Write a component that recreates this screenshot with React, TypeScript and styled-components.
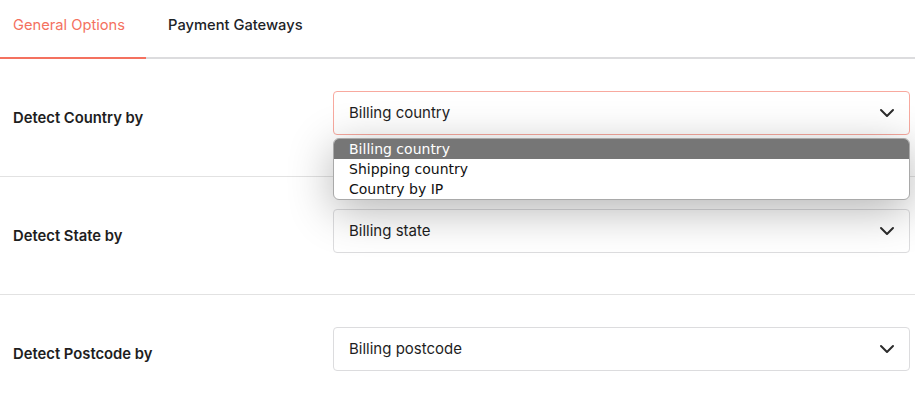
import React from "react";
import styled, { createGlobalStyle } from "styled-components";
import { ChevronDown } from "lucide-react";

const GlobalStyle = createGlobalStyle`
  html, body { margin: 0; padding: 0; background: #ffffff; }
  body { font-family: Inter, "Noto Sans", sans-serif; color: #1e1e1e; }
  * { box-sizing: border-box; }
`;

const Page = styled.div`
  width: 915px;
  display: flex;
  flex-direction: column;
`;

const TabBar = styled.nav`
  display: flex;
  border-bottom: 2px solid #dcdcde;
`;

const Tab = styled.div<{ $active?: boolean; $first?: boolean }>`
  font-size: 14.7px;
  line-height: 18px;
  font-weight: ${(p) => (p.$active ? 400 : 500)};
  padding: 16px ${(p) => (p.$first ? "21px" : "22px")} 23px ${(p) => (p.$first ? "13px" : "22px")};
  color: ${(p) => (p.$active ? "#f4715f" : "#1d2327")};
  border-bottom: 2px solid ${(p) => (p.$active ? "#f4715f" : "transparent")};
  margin-bottom: -2px;
`;

const Row = styled.div<{ $last?: boolean }>`
  display: grid;
  grid-template-columns: 333px 1fr;
  align-items: center;
  height: 118px;
  padding-right: 5px;
  border-bottom: 1px solid ${(p) => (p.$last ? "transparent" : "#e2e2e2")};
`;

const Label = styled.div`
  padding-left: 13px;
  font-size: 14.8px;
  font-weight: 600;
  color: #1e1e1e;
`;

const Field = styled.div`
  position: relative;
  margin-bottom: 10px;
`;

const SelectBox = styled.div<{ $focused?: boolean }>`
  height: 44px;
  display: flex;
  align-items: center;
  justify-content: space-between;
  padding: 0 10px 0 15px;
  border: 1px solid ${(p) => (p.$focused ? "#f8a99f" : "#dcdcde")};
  border-radius: 4px;
  background: #ffffff;
  font-size: 15px;
  font-weight: 400;
  color: #1e1e1e;
`;

const Chevron = styled(ChevronDown)`
  color: #2c2c2c;
  flex: none;
`;

const Popup = styled.ul`
  position: absolute;
  z-index: 5;
  left: 0;
  right: 0;
  top: calc(100% + 3px);
  margin: 0;
  padding: 0;
  list-style: none;
  background: #ffffff;
  border: 1px solid #a9a9a9;
  border-radius: 6px;
  overflow: hidden;
  box-shadow: 0 10px 45px rgba(0, 0, 0, 0.3);
  font-family: "DejaVu Sans", sans-serif;
  font-size: 14px;
`;

const Option = styled.li<{ $selected?: boolean }>`
  height: 20px;
  line-height: 20px;
  padding-left: 15px;
  background: ${(p) => (p.$selected ? "#767676" : "transparent")};
  color: ${(p) => (p.$selected ? "#ffffff" : "#111111")};
`;

type SelectProps = {
  value: string;
  focused?: boolean;
  options?: string[];
};

function Select({ value, focused, options }: SelectProps) {
  return (
    <Field>
      <SelectBox $focused={focused}>
        <span>{value}</span>
        <Chevron size={24} strokeWidth={2} />
      </SelectBox>
      {options && (
        <Popup>
          {options.map((o) => (
            <Option key={o} $selected={o === value}>
              {o}
            </Option>
          ))}
        </Popup>
      )}
    </Field>
  );
}

export default function App() {
  return (
    <>
      <GlobalStyle />
      <Page>
        <TabBar>
          <Tab $active $first>
            General Options
          </Tab>
          <Tab>Payment Gateways</Tab>
        </TabBar>
        <Row>
          <Label>Detect Country by</Label>
          <Select
            value="Billing country"
            focused
            options={["Billing country", "Shipping country", "Country by IP"]}
          />
        </Row>
        <Row>
          <Label>Detect State by</Label>
          <Select value="Billing state" />
        </Row>
        <Row $last>
          <Label>Detect Postcode by</Label>
          <Select value="Billing postcode" />
        </Row>
      </Page>
    </>
  );
}
